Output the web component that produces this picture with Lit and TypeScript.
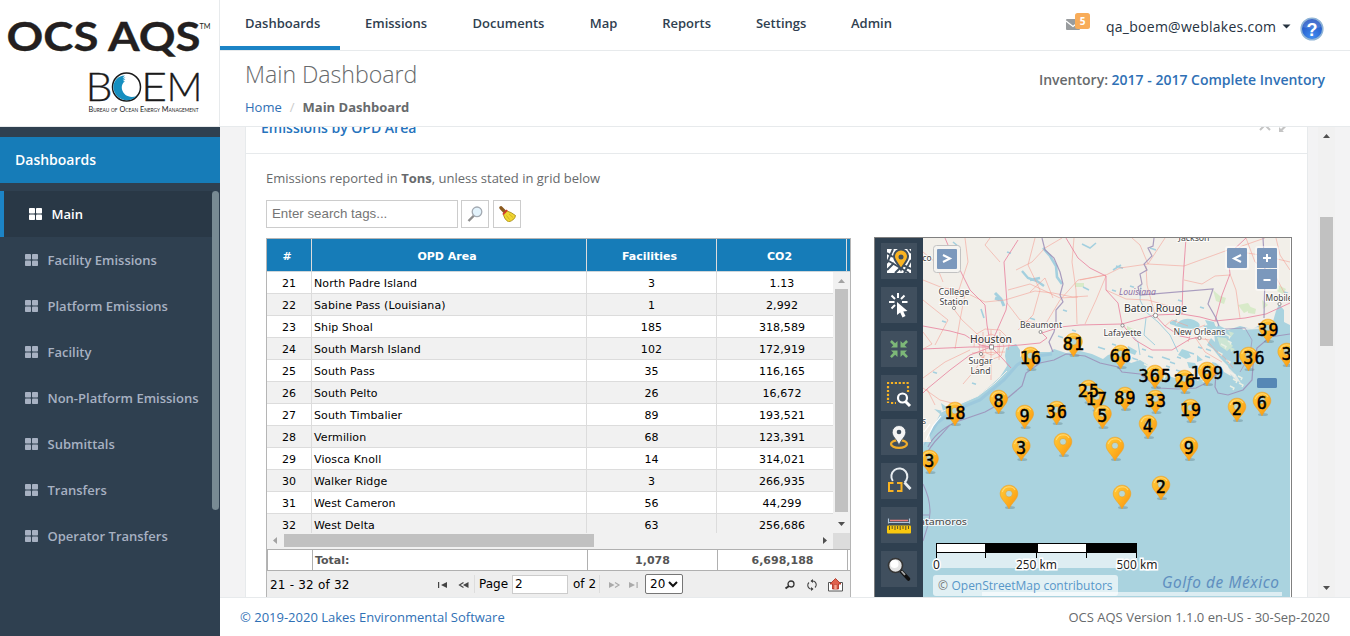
import { LitElement, html, svg, css } from "lit";
import { customElement } from "lit/decorators.js";
import { classMap } from "lit/directives/class-map.js";

const NAV = ["Dashboards", "Emissions", "Documents", "Map", "Reports", "Settings", "Admin"];
const NAV_WIDTHS = [75, 62.6, 72.2, 27.4, 48.8, 50, 42];

const SIDE = ["Main", "Facility Emissions", "Platform Emissions", "Facility", "Non-Platform Emissions", "Submittals", "Transfers", "Operator Transfers"];

const ROWS: [number, string, string, string][] = [
  [21, "North Padre Island", "3", "1.13"],
  [22, "Sabine Pass (Louisiana)", "1", "2,992"],
  [23, "Ship Shoal", "185", "318,589"],
  [24, "South Marsh Island", "102", "172,919"],
  [25, "South Pass", "35", "116,165"],
  [26, "South Pelto", "26", "16,672"],
  [27, "South Timbalier", "89", "193,521"],
  [28, "Vermilion", "68", "123,391"],
  [29, "Viosca Knoll", "14", "314,021"],
  [30, "Walker Ridge", "3", "266,935"],
  [31, "West Cameron", "56", "44,299"],
  [32, "West Delta", "63", "256,686"],
];

/* pin centre x, pin top y, cluster count */
const PINS: [number, number, string][] = [
  [1268, 319, "39"], [1073.5, 333, "81"], [1286.7, 343, "3"], [1120.7, 345, "66"], [1030.5, 347, "16"],
  [1248.5, 347, "136"], [1207, 362, "169"], [1155, 365, "365"], [1184.5, 370, "26"], [1088.5, 380, "25"],
  [1125, 387, "89"], [1096.5, 388, "17"], [998.7, 390, "8"], [1155.5, 390, "33"], [1262, 392, "6"],
  [1237, 398, "2"], [1190.5, 399, "19"], [1056.7, 401, "36"], [955, 402, "18"], [1024.7, 405, "9"],
  [1102.5, 405, "5"], [1148, 415, "4"], [1063, 433, ""], [1021.3, 437, "3"], [1115, 437, ""],
  [1189, 437, "9"], [929.5, 450, "3"], [1161, 476, "2"], [1009, 485, ""], [1122, 485, ""],
];

const ROADS_MAJOR = [
  "M923 349L970 347L991 347L1020 345L1040 343L1047 338L1042 333L1060 327L1080 325L1122 324L1155 315L1182 314L1200 317L1215 321L1245 318L1266 314L1290 303",
  "M991 347L987 325L985 305L970 290L960 270L958 255L948 245L945 238",
  "M991 347L995 335L1006 310L1007 303L1004 262L1018 240",
  "M991 347L980 345L965 335L950 331L923 326",
  "M991 347L970 355L950 370L927 389L923 393",
  "M991 347L1002 358L1011 368",
  "M1106 276L1106 290L1118 303L1122 324",
  "M1106 276L1090 268L1078 258L1066 238",
  "M1155 315L1165 326L1180 336L1190 338",
  "M1182 314L1183 280L1186 238",
  "M1215 321L1222 295L1230 274L1228 255L1246 238",
  "M1122 324L1135 340L1152 350L1172 350L1190 339L1200 337",
];
const ROADS_MINOR = [
  "M923 332L932 344L923 349", "M923 280L943 288L960 290L985 302L1005 300L1035 291L1053 293L1073 297L1088 296",
  "M923 252L935 262L943 282", "M1008 290L1030 284L1060 298L1078 297",
  "M965 238L968 262L953 308L962 320L991 347", "M1035 238L1028 265L1040 290L1033 315L1018 330",
  "M1074 238L1072 262L1076 290L1077 324", "M1045 325L1060 300L1078 280L1106 275",
  "M1080 280L1106 275L1120 268L1148 264L1184 266L1228 250L1260 255L1290 262",
  "M1106 276L1096 300L1085 324", "M1106 290L1126 299L1148 300L1182 310",
  "M1148 264L1140 245L1132 238M1148 264L1165 238", "M1146 266L1147 285L1155 315", "M1184 280L1202 284L1215 276L1230 275",
  "M1246 238L1255 262L1275 275L1288 300", "M1230 274L1236 290L1240 318", "M1228 255L1242 246L1265 238",
  "M979 347L981 357L990 360L1001 356L1004 347L1001 338L991 334L982 338Z",
  "M985 347L986 353L992 355L998 352L998 342L990 340L985 343Z",
  "M974 347L975 335L985 329L1000 330L1010 340L1008 350",
  "M991 330V380M983 332L983 360M1000 332L999 360M972 353L1005 352M975 340L1008 340",
  "M923 378L945 362L970 350", "M923 388L940 400L956 404M927 389L935 405", "M963 384L975 370L985 355",
  "M1007 303L1020 320L1045 325", "M1000 262L985 245L990 238", "M965 294L960 320L955 349",
  "M935 345L948 320L923 300", "M1016 270L1032 262L1045 248L1062 238", "M1030 292L1045 278L1053 298",
  "M1205 338L1215 350L1225 358L1233 368M1195 337L1205 352L1222 362",
  "M1188 342L1192 330L1205 325M1195 338L1210 340", "M1276 238L1280 255L1290 270", "M1165 326L1172 320L1188 326",
];

/* pale water specks: x, y, length */
const PONDS: [number, number, number][] = [
  [942, 321, 4], [1007, 252, 4], [1030, 318, 5], [1063, 310, 4], [1116, 266, 7], [1112, 290, 4], [1130, 286, 4],
  [1150, 248, 6], [1178, 300, 4], [1200, 307, 4], [1270, 285, 4], [1284, 292, 4], [933, 372, 4], [972, 383, 4], [1058, 336, 5],
  [1072, 330, 4], [1098, 347, 7], [1112, 344, 4], [1132, 358, 6], [1142, 349, 4], [1148, 356, 5], [1162, 357, 8], [1170, 362, 5],
  [1177, 357, 4], [1188, 352, 6], [1176, 370, 6], [1205, 356, 5], [1198, 347, 4], [1166, 366, 4], [1184, 374, 5], [1206, 349, 5],
];
const MARSH: [number, number, number][] = [
  [1222, 366, 5], [1229, 372, 6], [1233, 379, 4], [1226, 360, 4], [1218, 352, 4], [1221, 344, 5], [1228, 341, 3], [1225, 334, 5],
  [1238, 376, 4], [1230, 386, 4], [1239, 383, 4], [1200, 378, 4], [1190, 381, 4], [1152, 372, 5], [1128, 357, 4], [1144, 364, 4], [1160, 374, 5],
];

@customElement("gulf-map")
export class GulfMap extends LitElement {
  static styles = css`
    :host { display: block; width: 367px; height: 359px; overflow: hidden; }
    svg { display: block; }
    text { font-family: "Noto Sans", "Open Sans", sans-serif; }
    .town { font-size: 9px; fill: #444; stroke: #fff; stroke-opacity: .8; stroke-width: 2px; paint-order: stroke; text-anchor: middle; }
    .big { font-size: 10.5px; fill: #333; }
    .state { font-size: 8.8px; font-style: italic; fill: #8d70a8; text-anchor: middle; }
    .edge { text-anchor: start; }
    .count { font-family: "DejaVu Sans Mono", monospace; font-size: 16.8px; letter-spacing: 1.15px; fill: #000; stroke: #000; stroke-width: .45px; text-anchor: middle; }
    .sea { font-size: 15.4px; font-style: italic; fill: #5f8fc0; }
    .scale { font-size: 12px; fill: #222; stroke: #fff; stroke-width: 3px; paint-order: stroke; text-anchor: middle; }
    .attr { font-family: "Open Sans", sans-serif; font-size: 12px; fill: #5797c9; }
    .muted { fill: #777; }
    .major { fill: none; stroke: #e87f9c; stroke-width: 1; opacity: .8; }
    .minor { fill: none; stroke: #f49d92; stroke-width: .8; opacity: .7; }
    .river { fill: none; stroke: #a4d0df; stroke-width: 1.6; }
    .pond { fill: none; stroke: #a4d0df; stroke-width: 1.6; }
    .marsh { fill: none; stroke: #eaf0e4; stroke-width: 1.4; }
    .bound { fill: none; stroke: #9d8fb8; stroke-width: 1.2; opacity: .85; }
    .ctl { fill: #7b98bc; }
    .ctlbg { fill: #fff; fill-opacity: .5; }
    .glyph { fill: none; stroke: #fff; stroke-width: 2; }
    .ring { fill: #fff; stroke: #777; stroke-width: .8; }
  `;

  private town(x: number, y: number, name: string, w: number, cls = "town") {
    return svg`<text class=${cls} x=${x} y=${y} textLength=${w} lengthAdjust="spacingAndGlyphs">${name}</text>`;
  }

  render() {
    return html`<svg width="367" height="359" viewBox="923 238 367 359">
      <defs>
        <linearGradient id="pin" x1="0" y1="0" x2="1" y2="1">
          <stop offset="0" stop-color="#ffca3c"></stop><stop offset=".5" stop-color="#ffb321"></stop><stop offset="1" stop-color="#f98f0e"></stop>
        </linearGradient>
      </defs>
      <rect x="923" y="238" width="367" height="359" fill="#f2efe9"></rect>
      <g fill="#cfe8bd" opacity=".75">
        <path d="M1075 283h9v4h-9zM1238 305l10-2 4 6-8 4zM1248 306l8 3-1 5-7-1zM1262 300l6 5-5 4zM1213 290l7 6 6 2-2 6-8-3zM1268 262l5 1-2 6-4-1zM1127 326l12 6-3 4-9-3zM1278 285l8 4-3 5-6-3z"></path>
      </g>
      <g class="river">
        <path d="M1043 248L1050 256L1056 266L1057 277L1062 284" stroke-width="2.6"></path>
        <path d="M1022 271L1028 278L1037 281L1044 286M1030 280L1040 278" stroke-width="2.4"></path>
        <path d="M995 293l6 6 3 7M1000 300l-5-2" stroke-width="3"></path>
        <path d="M981 309l3 9M953 242l6 5"></path>
        <path d="M1082 244l8 4 6-5M1113 270l8-5M1083 287l6 3"></path>
        <path d="M1141 285L1140 300L1146 312L1158 322L1170 335L1178 352M1146 318L1144 335L1155 345M1128 330L1138 342L1140 355" stroke-width="1"></path>
      </g>
      ${PONDS.map(([x, y, l]) => svg`<path class="pond" d=${`M${x} ${y}l${l} ${l / 3}`}></path>`)}
      <path fill="#aad3df" d="M923 446L927 437L935 424L940 414L934 409L943 411L941 403L948 408L955 405L962 403L978 396L990 386L1000 377L1007 366L1005 356L1006 348L1011 346L1016 344L1020 350L1020 357L1029 352L1036 352L1044 352L1050 352L1054 349L1066 353L1080 351L1092 354L1103 359L1108 355L1118 352L1127 354L1124 359L1131 363L1140 360L1148 365L1145 370L1155 372L1160 369L1168 376L1179 379L1188 382L1192 377L1198 381L1204 374L1212 378L1214 370L1212 362L1220 364L1224 372L1231 376L1228 366L1220 358L1213 349L1207 345L1211 338L1215 342L1214 333L1218 325L1228 330L1240 326L1252 329L1262 324L1272 325L1276 311L1279 304L1284 310L1284 322L1290 325V597H923Z"></path>
      <g fill="#a9d5e0">
        <path d="M1175 326Q1182 316 1194 320Q1203 324 1198 328Q1187 330 1175 326ZM1203 326l10-2 5 4-9 3zM1170 322l7-3-1 7-6-2zM1205 320l9 2 2 6-8-2zM1182 349l6 2 3 6-5 2-8-4zM1187 362l8 1 3 6-9-1zM1197 355l6 5-6 2zM1128 346l9 5-2 4-8-3z"></path>
      </g>
      <g fill="#d4ead0" opacity=".8"><path d="M1217 337l9 1 7 8-6 5-7-5zM1228 331l6 2-3 4zM1230 347l5 2-4 3z"></path></g>
      ${MARSH.map(([x, y, l]) => svg`<path class="marsh" d=${`M${x} ${y}l${l} ${l / 2}l-1 2`}></path>`)}
      <g fill="#f2efe9" opacity=".8">
        <path d="M1242 328l18-1-1 2-16 1zM1216 358l5 5 8 5 7 7 5 8-5-3-8-8-8-5-6-6z"></path>
      </g>
      <path d="M923 445L937 423L953 411L980 400L1004 380L1017 365L1030 357L1052 354" fill="none" stroke="#8dbcdb" stroke-width="3" opacity=".45"></path>
      <path d="M941 412L953 407L978 396L995 383L1007 371" fill="none" stroke="#f2efe9" stroke-width="1"></path>
      ${ROADS_MINOR.map((d) => svg`<path class="minor" d=${d}></path>`)}
      ${ROADS_MAJOR.map((d) => svg`<path class="major" d=${d}></path>`)}
      <g class="bound">
        <path d="M1042 238L1045 250L1054 258L1060 272L1063 284L1060 295L1063 302L1056 310L1056 322L1054 332L1049 342L1053 352"></path>
        <path d="M1154 238L1153 246L1148 248L1152 256L1144 264L1147 270L1140 274L1142 284L1138 287L1140 295L1213 289L1208 304L1216 318L1219 326"></path>
        <path d="M1263 238L1265 272L1264 318"></path>
        <path d="M928 447Q935 432 956 422L985 412L1003 402L1022 386L1026 373L1040 363L1054 360L1066 354L1085 356L1100 363L1118 367L1122 372L1140 374L1147 379L1158 388L1178 389L1196 388L1208 382L1216 374L1215 387L1218 393L1228 395L1243 390L1252 380L1253 365L1257 348L1270 337L1290 334"></path>
        <path d="M1225 329L1245 328L1252 340L1250 355L1240 372" stroke-width=".8"></path>
        <path d="M923 461Q929 447 940 436L950 425M923 484Q930 498 930 512L929 522L923 541M923 515h6" stroke-width="1.100"></path>
      </g>
      <path d="M923 442h8l-4-18-4 2Z" fill="#f2efe9"></path>
      <path d="M926 440L933 426L941 416M924 432l6-8" fill="none" stroke="#fff" stroke-width="1.200"></path>
      <circle class="ring" cx="954" cy="308" r="1.6"></circle>
      <rect class="ring" x="989.500" y="345" width="4" height="4"></rect>
      <circle class="ring" cx="981" cy="354" r="1.6"></circle>
      <circle class="ring" cx="1040.500" cy="332" r="1.5"></circle>
      <circle class="ring" cx="1155.500" cy="315.500" r="2.200"></circle>
      <circle class="ring" cx="1122.500" cy="325.500" r="1.6"></circle>
      <circle class="ring" cx="1199.500" cy="338" r="1.6"></circle>
      <circle class="ring" cx="1279.500" cy="304" r="1.6"></circle>
      ${this.town(1194, 241, "Jackson", 31)}
      ${this.town(927, 261, "co", 9)}
      ${this.town(954, 295, "College", 31)}
      ${this.town(954, 305, "Station", 29)}
      ${this.town(1041, 328, "Beaumont", 42)}
      ${this.town(991, 342.500, "Houston", 42, "town big")}
      ${this.town(980.500, 363.500, "Sugar", 24)}
      ${this.town(980.500, 374, "Land", 20)}
      ${this.town(1137.500, 295, "Louisiana", 37, "state")}
      ${this.town(1155.500, 311.500, "Baton Rouge", 63, "town big")}
      ${this.town(1122.500, 336, "Lafayette", 38)}
      ${this.town(1199.500, 335, "New Orleans", 52)}
      ${this.town(1265.500, 301, "Mobile", 27, "town edge")}
      ${this.town(943, 525, "atamoros", 48)}
      ${this.town(924, 424, "s", 4)}
      ${PINS.map(([x, y]) => svg`
        <ellipse cx=${x + 1} cy=${y + 22.500} rx="5" ry="1.6" fill="#55757f" opacity=".35"></ellipse>
        <g transform=${`translate(${x - 9} ${y})`}>
          <path d="M9 .2C4 .2 .2 4 .2 8.800C.2 14 6.300 18 9 23.800C11.700 18 17.800 14 17.800 8.800C17.800 4 14 .2 9 .2Z" fill="url(#pin)" stroke="#f2a01c" stroke-width=".6"></path>
          <path d="M2.200 7Q4 2 9 1.700Q13.500 1.700 15 5" fill="none" stroke="#ffe08a" stroke-width="1.100" opacity=".75"></path>
          <circle cx="9" cy="8.700" r="3.300" fill="#b9d8d6" stroke="#e79a1c" stroke-width=".5"></circle>
        </g>`)}
      ${PINS.map(([x, y, n]) => (n ? svg`<text class="count" x=${x + 0.4} y=${y + 16.6}>${n}</text>` : ""))}
      <rect x="933.500" y="245.500" width="27" height="27" rx="3" fill="#f5f4f1" stroke="#c2c2c2"></rect>
      <rect class="ctl" x="937" y="249" width="20" height="20" rx="1"></rect>
      <path class="glyph" d="M943 255L950 258.500L943 262"></path>
      <rect class="ctlbg" x="1225" y="246" width="24" height="24" rx="3"></rect>
      <rect class="ctl" x="1227" y="248" width="20" height="20" rx="1"></rect>
      <path class="glyph" d="M1241 255L1234 258.500L1241 262"></path>
      <rect class="ctlbg" x="1255" y="246" width="24" height="45" rx="3"></rect>
      <path class="ctl" d="M1257 268v-19q0-1 1-1h18q1 0 1 1v19zM1257 269h20v19q0 1-1 1h-18q-1 0-1-1z"></path>
      <path class="glyph" d="M1263 258h8M1267 254v8M1263.500 280h7"></path>
      <rect x="1257" y="378" width="20" height="10" rx="1.500" fill="#5687b5"></rect>
      <rect x="936" y="552" width="201" height="16" fill="#fff" opacity=".6"></rect>
      <rect x="936.500" y="543.500" width="200" height="9" fill="#fff" stroke="#000"></rect>
      <path d="M985 543h53v10h-53zM1086 543h51v10h-51z"></path>
      <path d="M936.500 552v6M985.500 552v6M1036.500 552v6M1086.500 552v6M1136.500 552v6" stroke="#000"></path>
      <text class="scale" x="936.500" y="569">0</text>
      <text class="scale" x="1036.500" y="569" textLength="41">250 km</text>
      <text class="scale" x="1137" y="569" textLength="41">500 km</text>
      <rect x="982" y="592" width="300" height="4" fill="#fff" opacity=".6"></rect>
      <rect x="933" y="575" width="185" height="21" rx="3" fill="#fff" opacity=".65"></rect>
      <text class="attr muted" x="938" y="590">©</text>
      <text class="attr" x="951.500" y="590" textLength="161">OpenStreetMap contributors</text>
      <text class="sea" x="1162" y="588" textLength="117">Golfo de México</text>
    </svg>`;
  }
}

@customElement("map-tools")
export class MapTools extends LitElement {
  static styles = css`
    :host { display: flex; flex-direction: column; gap: 8px; width: 36px; padding: 5px 6px 0; background: #2f4050; overflow: hidden; }
    svg { display: block; flex: none; background: #404f5e; }
  `;

  private icons = [
    svg`<rect x="6" y="6" width="24" height="24" fill="#fff"></rect><path d="M6 10L12 14M12 6L6 20M6 17L28 30M14 30L22 22L30 26M6 27L13 20M27 6L30 10M30 17L23 30" fill="none" stroke="#404f5e" stroke-width="2"></path><path d="M20 6.500a7 7 0 0 0-7 7c0 4.500 4.500 7.500 7 13c2.500-5.500 7-8.500 7-13a7 7 0 0 0-7-7z" fill="#f9b322" stroke="#404f5e" stroke-width="2"></path><circle cx="20" cy="14" r="2.500" fill="#404f5e"></circle>`,
    svg`<path d="M16 15L16 28L19.200 25.500L21.500 30.500L24.500 29L22.300 24.500L26.500 24Z" fill="#fff"></path><path d="M17 6v5M8 15h5.500M21 15h5.500M10.500 8.500l3.500 3.500M23.500 8.500L20 12M10.500 21.500L14 18" stroke="#fff" stroke-width="2"></path>`,
    svg`<g fill="#7db878"><path d="M16.500 16.500H10L12.300 14.200L9 10.900L10.800 9L14.200 12.300L16.500 10Z"></path><path d="M19.500 16.500V10L21.800 12.300L25.200 9L27 10.900L23.700 14.200L26 16.500Z"></path><path d="M16.500 19.500V26L14.200 23.700L10.800 27L9 25.200L12.300 21.800L10 19.500Z"></path><path d="M19.500 19.500H26L23.700 21.800L27 25.200L25.200 27L21.800 23.700L19.500 26Z"></path></g>`,
    svg`<path d="M6 8h22M27 11v6M7 11v17M10 28h5" fill="none" stroke="#f9b322" stroke-width="2.200" stroke-dasharray="2.200 1.700"></path><circle cx="21.500" cy="23" r="4.500" fill="none" stroke="#fff" stroke-width="2.200"></circle><path d="M24.500 26.500L29 31" stroke="#fff" stroke-width="3"></path>`,
    svg`<ellipse cx="18" cy="25" rx="8" ry="3.800" fill="none" stroke="#f0ac2c" stroke-width="2.300"></ellipse><path d="M18 6.500a6.800 6.800 0 0 0-6.800 6.800c0 4.500 4.800 7 6.800 13c2-6 6.800-8.500 6.800-13a6.800 6.800 0 0 0-6.800-6.800z" fill="#f4f4f4" stroke="#404f5e" stroke-width=".8"></path><circle cx="18" cy="13" r="2.300" fill="#404f5e"></circle>`,
    svg`<path d="M11.800 18A8 8 0 1 1 23.500 19.500" fill="none" stroke="#e8edf0" stroke-width="2"></path><path d="M23.500 19.500L29.500 26" stroke="#e8edf0" stroke-width="2.800"></path><path d="M12.500 20H8v8h4.500M16 20H20.500v8H16" fill="none" stroke="#f9b322" stroke-width="2"></path>`,
    svg`<path d="M7.500 11.500v5M28.500 11.500v5M7.500 15.500h21" stroke="#aec3d6" stroke-width="1.200"></path><path d="M9 13.500h18" stroke="#e88080" stroke-width="1.500"></path><rect x="6" y="18.500" width="24" height="8" rx="1" fill="#f9c80e"></rect><path d="M8.500 19v4M11.200 19v3M14 19v4M16.600 19v3M19.200 19v4M22 19v3M24.800 19v4M27.500 19v3" stroke="#5c532c" stroke-width="1"></path>`,
    svg`<path d="M20 20L27.500 28" stroke="#111" stroke-width="3.600" stroke-linecap="round"></path><path d="M20.500 20L24 23.800" stroke="#aaa" stroke-width="1.800"></path><circle cx="14.500" cy="14.500" r="7" fill="#e4e4e4" stroke="#353535" stroke-width="1.600"></circle><circle cx="13.500" cy="13" r="4" fill="#fff"></circle>`,
  ];

  render() {
    return html`${this.icons.map((i) => html`<svg width="36" height="36" viewBox="0 0 36 36">${i}</svg>`)}`;
  }
}

@customElement("opd-grid")
export class OpdGrid extends LitElement {
  static styles = css`
    :host { display: block; width: 583px; border: 1px solid #b5b5b5; border-bottom: 0; font: 11px "DejaVu Sans", Verdana, sans-serif; color: #000; }
    .cols { display: grid; grid-template-columns: 45px 275px 130px 130px 1fr; }
    .cols > div { box-sizing: border-box; border-right: 1px solid #dcdcdc; text-align: center; white-space: nowrap; overflow: hidden; }
    .cols > div:last-child { border-right: 0; }
    .head { background: #167cb8; color: #fff; font-weight: bold; font-size: 11px; line-height: 35px; height: 32px; border-bottom: 1px solid #cfd6da; }
    .cols.head > div { padding-right: 4px; height: 32px; }
    .mid { display: flex; height: 261px; }
    .rows { width: 566px; overflow: hidden; }
    .row { height: 21px; line-height: 23px; border-bottom: 1px solid #dcdcdc; letter-spacing: .1px; }
    .row > div { height: 21px; }
    .row.alt { background: #f1f1f1; }
    .cols > .name { text-align: left; padding-left: 2px; }
    .vs { width: 17px; background: #f1f1f1; display: flex; flex-direction: column; align-items: center; justify-content: space-between; }
    .vs svg, .hs svg { display: block; flex: none; }
    .vt { width: 13px; height: 223px; background: #c1c1c1; }
    .hs { height: 16px; background: #f1f1f1; display: flex; align-items: flex-start; }
    .ht { width: 310px; height: 13px; margin-top: 1px; background: #c1c1c1; }
    .gap { flex: 1; }
    .corner { width: 17px; height: 16px; background: #dcdcdc; }
    .total { background: #fff; border-top: 1px solid #b0b0b0; border-bottom: 1px solid #b0b0b0; border-left: 1px solid #b0b0b0; height: 20px; line-height: 21px; font-weight: bold; color: #555; }
    .cols.total > div { border-color: #b0b0b0; }
    .pager { display: flex; align-items: center; height: 26px; background: #eee; font-size: 12px; padding-left: 3px; }
    .pager > * { flex: none; }
    .status { width: 167px; font-size: 12px; letter-spacing: .2px; padding-top: 1px; }
    .arrow { width: 20px; height: 10px; }
    .arrow.next { margin-left: 8px; }
    .arrow.last { width: 17px; }
    .sep { width: 1px; height: 18px; background: #ddd; }
    .page { width: 33px; padding-left: 4px; }
    .num { box-sizing: border-box; width: 56px; height: 19px; border: 1px solid #ccc; background: #fff; line-height: 17px; padding-left: 2px; }
    .of { width: 26px; padding-left: 5px; }
    .sel { box-sizing: border-box; display: flex; align-items: center; justify-content: space-between; width: 38px; height: 20px; border: 1px solid #767676; border-radius: 2px; background: #fff; padding: 0 4px 0 4px; }
    .tools { display: flex; align-items: center; justify-content: space-between; width: 59px; margin-left: 101px; padding-top: 2px; }
  `;

  render() {
    return html`
      <div class="cols head"><div>#</div><div>OPD Area</div><div>Facilities</div><div>CO2</div><div></div></div>
      <div class="mid">
        <div class="rows">
          ${ROWS.map((r, i) => html`<div class=${classMap({ cols: true, row: true, alt: i % 2 === 1 })}>
            <div>${r[0]}</div><div class="name">${r[1]}</div><div>${r[2]}</div><div>${r[3]}</div></div>`)}
        </div>
        <div class="vs">
          <svg width="17" height="17"><path d="M5 11L8.500 7L12 11Z" fill="#a3a3a3"></path></svg>
          <div class="vt"></div><div class="gap"></div>
          <svg width="17" height="17"><path d="M5 6L8.500 10L12 6Z" fill="#505050"></path></svg>
        </div>
      </div>
      <div class="hs">
        <svg width="17" height="16"><path d="M10 4L6 7.500L10 11Z" fill="#a3a3a3"></path></svg>
        <div class="ht"></div><div class="gap"></div>
        <svg width="17" height="16"><path d="M7 4L11 7.500L7 11Z" fill="#505050"></path></svg>
        <div class="corner"></div>
      </div>
      <div class="cols total"><div></div><div class="name">Total:</div><div>1,078</div><div>6,698,188</div><div></div></div>
      <div class="pager">
        <span class="status">21 - 32 of 32</span>
        <svg class="arrow" viewBox="0 0 20 10"><path d="M1 3h1.200v6H1zM10 3v6L4 6z" fill="#444"></path></svg>
        <svg class="arrow" viewBox="0 0 17 10"><path d="M5 3.500L1 6L5 8.500" fill="none" stroke="#444" stroke-width="1.200"></path><path d="M10 3v6L4.500 6z" fill="#444"></path></svg>
        <i class="sep" style=${"margin-left:-3px"}></i>
        <span class="page">Page</span>
        <span class="num">2</span>
        <span class="of">of 2</span>
        <i class="sep"></i>
        <svg class="arrow next" viewBox="0 0 20 10"><path d="M1 3v6L6.500 6z" fill="#aaa"></path><path d="M7 3.500L11 6L7 8.500" fill="none" stroke="#aaa" stroke-width="1.200"></path></svg>
        <svg class="arrow last" viewBox="0 0 17 10"><path d="M1 3v6L7 6zM8.500 3h1.200v6H8.500z" fill="#aaa"></path></svg>
        <span class="sel">20<svg width="10" height="7"><path d="M1 1L5 5L9 1" fill="none" stroke="#111" stroke-width="2"></path></svg></span>
        <span class="tools">
          <svg width="12" height="12"><circle cx="7" cy="5" r="3" fill="none" stroke="#333" stroke-width="1.300"></circle><path d="M5 7L1.500 9.500" stroke="#333" stroke-width="2"></path></svg>
          <svg width="12" height="12"><path d="M9 8.500A3.800 3.800 0 0 0 8 2.200L5 2M3 3.500A3.800 3.800 0 0 0 4 9.800L7 10" fill="none" stroke="#444" stroke-width="1.100"></path><path d="M7 0v4L4.500 2zM5 8v4L7.500 10z" fill="#444"></path></svg>
          <svg width="15" height="14"><path d="M3.500 4.500H.5v8.500h14V4.500h-3" fill="#fff" stroke="#555"></path><path d="M7.500 .5L13 6H10.500V11H4.500V6H2Z" fill="#e0614c" stroke="#a8281b" stroke-width=".8"></path><path d="M6 11V6.500h3V11" fill="#f7a48f" stroke="#a8281b" stroke-width=".4"></path></svg>
        </span>
      </div>`;
  }
}

@customElement("app-root")
export class AppRoot extends LitElement {
  static styles = css`
    :host { display: flex; width: 1350px; height: 636px; overflow: hidden; background: #f3f3f4; font: 13px "Open Sans", "Noto Sans", sans-serif; color: #676a6c; }
    svg { display: block; flex: none; }
    aside { width: 220px; background: #2f4050; flex: none; }
    .logo { box-sizing: border-box; height: 127px; background: #fff; border-right: 1px solid #e7eaec; border-bottom: 1px solid #e7eaec; }
    .logo text { font-family: "Lato", sans-serif; }
    .agency { font-size: 7.6px; font-variant: small-caps; fill: #222; }
    .section { margin-top: 10px; height: 46px; line-height: 46px; padding-left: 15px; background: #167cb8; color: #fff; font-weight: 600; font-size: 14px; }
    .menu { margin-top: 8px; display: flex; }
    .items { width: 212px; }
    .item { display: flex; align-items: center; box-sizing: border-box; height: 46px; padding-left: 25px; gap: 9.5px; color: #a7b1c2; font-weight: 600; white-space: nowrap; }
    .item.on { background: #293846; border-left: 4px solid #1c84c6; color: #fff; }
    .thumb { width: 7px; height: 319px; background: #788a93; border-radius: 4px; }
    main { flex: 1; min-width: 0; display: flex; flex-direction: column; }
    .top { display: flex; height: 50px; background: #fff; border-bottom: 1px solid #e7eaec; }
    .nav { box-sizing: border-box; height: 50px; padding: 0 20px 0 25px; line-height: 46px; font-weight: 600; font-size: 13px; color: #2f4050; white-space: nowrap; }
    .nav.on { border-bottom: 4px solid #1c84c6; }
    .nav span { display: block; }
    .user { margin-left: auto; display: flex; align-items: center; padding-right: 26px; color: #26323f; font-size: 14px; padding-top: 3px; height: 46px; }
    .mail { width: 41px; margin-top: -9px; }
    .email { width: 171px; margin-right: 5px; white-space: nowrap; letter-spacing: .26px; }
    .help { margin-left: 9px; margin-top: 6px; }
    .heading { display: flex; justify-content: space-between; box-sizing: border-box; height: 76px; background: #fff; border-bottom: 1px solid #e7eaec; padding: 7px 25px 0; }
    h2 { margin: 0; font-weight: 300; font-size: 23.2px; letter-spacing: -.05px; line-height: 32px; }
    .crumb { margin-top: 7px; line-height: 20px; }
    .crumb i { font-style: normal; color: #ccc; padding: 0 8px; }
    .link { color: #2f70b5; }
    .inv { font-size: 14px; font-weight: 600; line-height: 20px; padding-top: 12px; white-space: nowrap; }
    .body { display: flex; height: 470px; overflow: hidden; }
    .panel { width: 1061px; margin-left: 25px; background: #fff; border: solid #e7eaec; border-width: 0 1px; }
    .ptitle { display: flex; justify-content: space-between; height: 48px; line-height: 46px; margin-top: -22px; border-bottom: 1px solid #e7eaec; padding: 0 20px 0 15px; font-size: 14px; font-weight: 600; color: #2673bd; }
    .pt-icons { display: flex; gap: 8px; padding-top: 17px; }
    .note { padding: 14px 0 0 20px; line-height: 20px; height: 32px; }
    .search { display: flex; gap: 3px; padding-left: 20px; height: 28px; }
    .box { box-sizing: border-box; border: 1px solid #ccc; height: 28px; background: #fff; }
    .field { width: 192px; font: 13.3px "Liberation Sans", Arial, sans-serif; line-height: 26px; padding-left: 5px; color: #757575; }
    .ib { width: 28px; padding: 5px; }
    .ib + .ib { margin-left: 1px; }
    .cols { display: flex; align-items: flex-start; padding-left: 20px; margin-top: 10px; }
    .mapbox { display: flex; box-sizing: border-box; width: 418px; height: 361px; margin: -1px 0 0 23px; border: 1px solid #808080; }
    .scroll { display: flex; flex-direction: column; align-items: center; width: 17px; margin-left: 10px; background: #f1f1f1; }
    .scroll svg:last-child { margin-top: auto; }
    .sthumb { width: 13px; height: 129px; background: #c1c1c1; margin-top: 73px; }
    footer { display: flex; justify-content: space-between; box-sizing: border-box; height: 39px; border-top: 1px solid #e7eaec; background: #fff; padding: 0 20px; line-height: 39px; }
  `;

  render() {
    return html`
      <aside>
        <div class="logo">
          <svg width="219" height="126" viewBox="0 0 219 126">
            <text x="6.500" y="50.500" font-weight="700" font-size="39.500" fill="#231f20" stroke="#231f20" stroke-width=".3" textLength="194" lengthAdjust="spacingAndGlyphs">OCS AQS</text>
            <text x="199.500" y="28.500" font-size="7.500" fill="#231f20" textLength="11" lengthAdjust="spacingAndGlyphs">TM</text>
            <g font-weight="300" font-size="38.500" fill="#1a1a1a" stroke="#1a1a1a" stroke-width=".3">
              <text x="85.500" y="101" textLength="27" lengthAdjust="spacingAndGlyphs">B</text>
              <text x="141" y="101" textLength="26" lengthAdjust="spacingAndGlyphs">E</text>
              <text x="166.500" y="101" textLength="36" lengthAdjust="spacingAndGlyphs">M</text>
            </g>
            <circle cx="126.500" cy="87" r="14" fill="#fff" stroke="#1a1a1a" stroke-width="1.500"></circle>
            <path d="M125 75.500C118 75.500 113.500 81 113.300 87C113.500 94 119 100.200 127 100.200C131 100.200 134 98.500 136.500 96C130 98.500 123.500 95.500 122 89.500C121.200 85.500 122.800 82.500 125 81.500L123 81L125.500 79L122.500 79.500L125.500 77.500L122.500 77.800Z" fill="#158fc0"></path>
            <text class="agency" x="88.500" y="112" textLength="110" lengthAdjust="spacingAndGlyphs">Bureau of Ocean Energy Management</text>
          </svg>
        </div>
        <div class="section">Dashboards</div>
        <div class="menu">
          <div class="items">
            ${SIDE.map((s, i) => html`<div class=${classMap({ item: true, on: i === 0 })}>
              <svg width="13" height="12" fill="currentColor"><rect width="6" height="5.500" rx=".8"></rect><rect x="7" width="6" height="5.500" rx=".8"></rect><rect y="6.500" width="6" height="5.500" rx=".8"></rect><rect x="7" y="6.500" width="6" height="5.500" rx=".8"></rect></svg>
              <span>${s}</span></div>`)}
          </div>
          <div class="thumb"></div>
        </div>
      </aside>
      <main>
        <div class="top">
          ${NAV.map((n, i) => html`<div class=${classMap({ nav: true, on: i === 0 })}><span style=${`width:${NAV_WIDTHS[i]}px`}>${n}</span></div>`)}
          <div class="user">
            <svg class="mail" height="18" viewBox="0 0 41 18">
              <rect x="1" y="6" width="14" height="11" rx="1" fill="#999c9e"></rect><path d="M1 8L8 13.500L15 8" fill="none" stroke="#fff" stroke-width="1.300"></path>
              <rect x="10" y="0" width="15" height="16" rx="2.500" fill="#f8ac59"></rect>
              <text x="17.500" y="12" text-anchor="middle" font-family="Open Sans" font-weight="700" font-size="10" fill="#fff">5</text>
            </svg>
            <span class="email">qa_boem@weblakes.com</span>
            <svg width="9" height="5"><path d="M.5 .5h8L4.500 4.500Z" fill="#26323f"></path></svg>
            <svg class="help" width="24" height="24">
              <defs><radialGradient id="h" cx=".5" cy=".85" r=".8"><stop offset="0" stop-color="#3f8cf0"></stop><stop offset="1" stop-color="#1f4fc0"></stop></radialGradient></defs>
              <circle cx="12" cy="12" r="10.800" fill="url(#h)" stroke="#8fb4d6" stroke-width="1.600"></circle>
              <path d="M3 10a9 8 0 0 1 18 0q-9 3-18 0z" fill="#fff" opacity=".15"></path>
              <text x="12" y="18.500" text-anchor="middle" font-family="Liberation Sans" font-weight="700" font-size="18" fill="#fff">?</text>
            </svg>
          </div>
        </div>
        <div class="heading">
          <div><h2>Main Dashboard</h2><div class="crumb"><span class="link">Home</span><i>/</i><b>Main Dashboard</b></div></div>
          <div class="inv">Inventory: <span class="link">2017 - 2017 Complete Inventory</span></div>
        </div>
        <div class="body">
          <div class="panel">
            <div class="ptitle"><span>Emissions by OPD Area</span>
              <span class="pt-icons">
                <svg width="12" height="12"><path d="M1 8L6 3L11 8" fill="none" stroke="#c4c4c4" stroke-width="2"></path></svg>
                <svg width="8" height="12"><path d="M0 5v5h5L3.500 8.500L7 5L5.500 3.500L2 7Z" fill="#c4c4c4"></path></svg>
              </span></div>
            <div class="note">Emissions reported in <b>Tons</b>, unless stated in grid below</div>
            <div class="search">
              <div class="box field">Enter search tags...</div>
              <div class="box ib"><svg width="16" height="16"><path d="M7 9.500L1.500 15" stroke="#8d8d8d" stroke-width="2.400"></path><circle cx="10" cy="5.800" r="4.800" fill="#e3f3fc" stroke="#a3aab2" stroke-width="1.300"></circle></svg></div>
              <div class="box ib"><svg width="17" height="16"><path d="M2 1.800L5.500 5.500" stroke="#8b5a1e" stroke-width="3.400" stroke-linecap="round"></path><path d="M8 5Q12 6 16.500 9.500Q16 14 9.500 16Q5 13 4.500 9Z" fill="#f0d531" stroke="#a08410" stroke-width=".8"></path><path d="M8.200 4L3.800 8.500" stroke="#d8322a" stroke-width="1.600"></path><path d="M7.500 9.500l3 4M10 8l4 3.500" stroke="#c8a81c" stroke-width=".7"></path></svg></div>
            </div>
            <div class="cols">
              <opd-grid></opd-grid>
              <div class="mapbox"><map-tools></map-tools><gulf-map></gulf-map></div>
            </div>
          </div>
          <div class="scroll">
            <svg width="17" height="17"><path d="M5 11L8.500 7L12 11Z" fill="#505050"></path></svg>
            <div class="sthumb"></div>
            <svg width="17" height="17"><path d="M5 6L8.500 10L12 6Z" fill="#505050"></path></svg>
          </div>
        </div>
        <footer><span class="link">© 2019-2020 Lakes Environmental Software</span><span>OCS AQS Version 1.1.0 en-US - 30-Sep-2020</span></footer>
      </main>`;
  }
}
